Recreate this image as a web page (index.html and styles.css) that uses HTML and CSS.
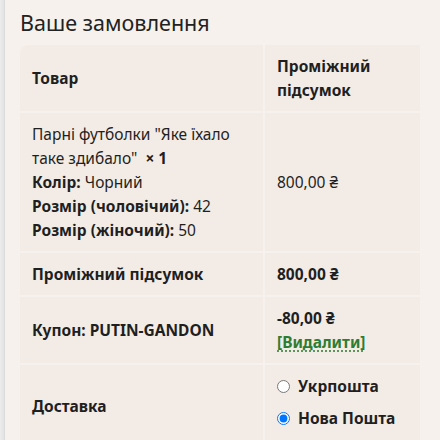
FILE: index.html
```html
<!DOCTYPE html>
<html lang="uk">
<head>
<meta charset="utf-8">
<title>Ваше замовлення</title>
<link rel="stylesheet" href="styles.css">
</head>
<body>
<div class="frame">
  <div class="edge"></div>
  <main class="panel">
    <h3 class="title">Ваше замовлення</h3>
    <div class="order">
      <div class="cell head">Товар</div>
      <div class="cell head">Проміжний підсумок</div>

      <div class="cell item">
        <div>Парні футболки "Яке їхало таке здибало" <strong class="qty">× 1</strong></div>
        <div><strong>Колір:</strong> Чорний</div>
        <div><strong>Розмір (чоловічий):</strong> 42</div>
        <div><strong>Розмір (жіночий):</strong> 50</div>
      </div>
      <div class="cell">800,00 ₴</div>

      <div class="cell head">Проміжний підсумок</div>
      <div class="cell head">800,00 ₴</div>

      <div class="cell head">Купон: PUTIN-GANDON</div>
      <div class="cell head">
        <div>-80,00 ₴</div>
        <div><a class="remove" href="#">[Видалити]</a></div>
      </div>

      <div class="cell head">Доставка</div>
      <div class="cell">
        <ul class="methods">
          <li><label class="method"><input type="radio" name="ship"> Укрпошта</label></li>
          <li><label class="method"><input type="radio" name="ship" checked> Нова Пошта</label></li>
        </ul>
      </div>
    </div>
  </main>
  <div class="rest"></div>
</div>
</body>
</html>
```

FILE: styles.css
```css
html, body {
  margin: 0;
  padding: 0;
  background: #f7f7f7;
  height: 100%;
  overflow: hidden;
}

.frame {
  display: flex;
  height: 440px;
  font-family: "Noto Sans", "Open Sans", sans-serif;
  color: #1f1f1f;
}

.edge {
  width: 5px;
  flex: none;
  background: linear-gradient(to right, #ececec, #e4e4e4 70%, #d8d8d8);
}

.panel {
  width: 414px;
  flex: none;
  background: #f6f1ed;
  padding: 0 14px 0 15px;
  border-right: 1px solid #d6d6d6;
}

.rest {
  flex: 1;
  background: #f4f4f4;
}

.title {
  margin: 0 0 9px;
  padding-top: 9px;
  font-size: 21.5px;
  font-weight: 400;
  line-height: 27px;
  color: #222;
}

.order {
  display: grid;
  grid-template-columns: 243px 155px;
  gap: 2px;
  border-radius: 8px;
  overflow: hidden;
  font-size: 15.5px;
  line-height: 24px;
}

.cell {
  background: #f3ece6;
  padding: 9px 12px;
  display: flex;
  flex-direction: column;
  justify-content: center;
}

.head {
  font-weight: 700;
}

.item strong {
  font-weight: 700;
}

.qty {
  margin-left: 4px;
}

.remove {
  color: #2e7d32;
  text-decoration: underline dotted;
  text-underline-offset: 3px;
}

.methods {
  list-style: none;
  margin: 0;
  padding: 0;
}

.methods li {
  margin-bottom: 8px;
}

.method {
  display: flex;
  align-items: center;
  gap: 8px;
  font-weight: 700;
}

.method input {
  margin: 0;
  width: 13px;
  height: 13px;
}
```
